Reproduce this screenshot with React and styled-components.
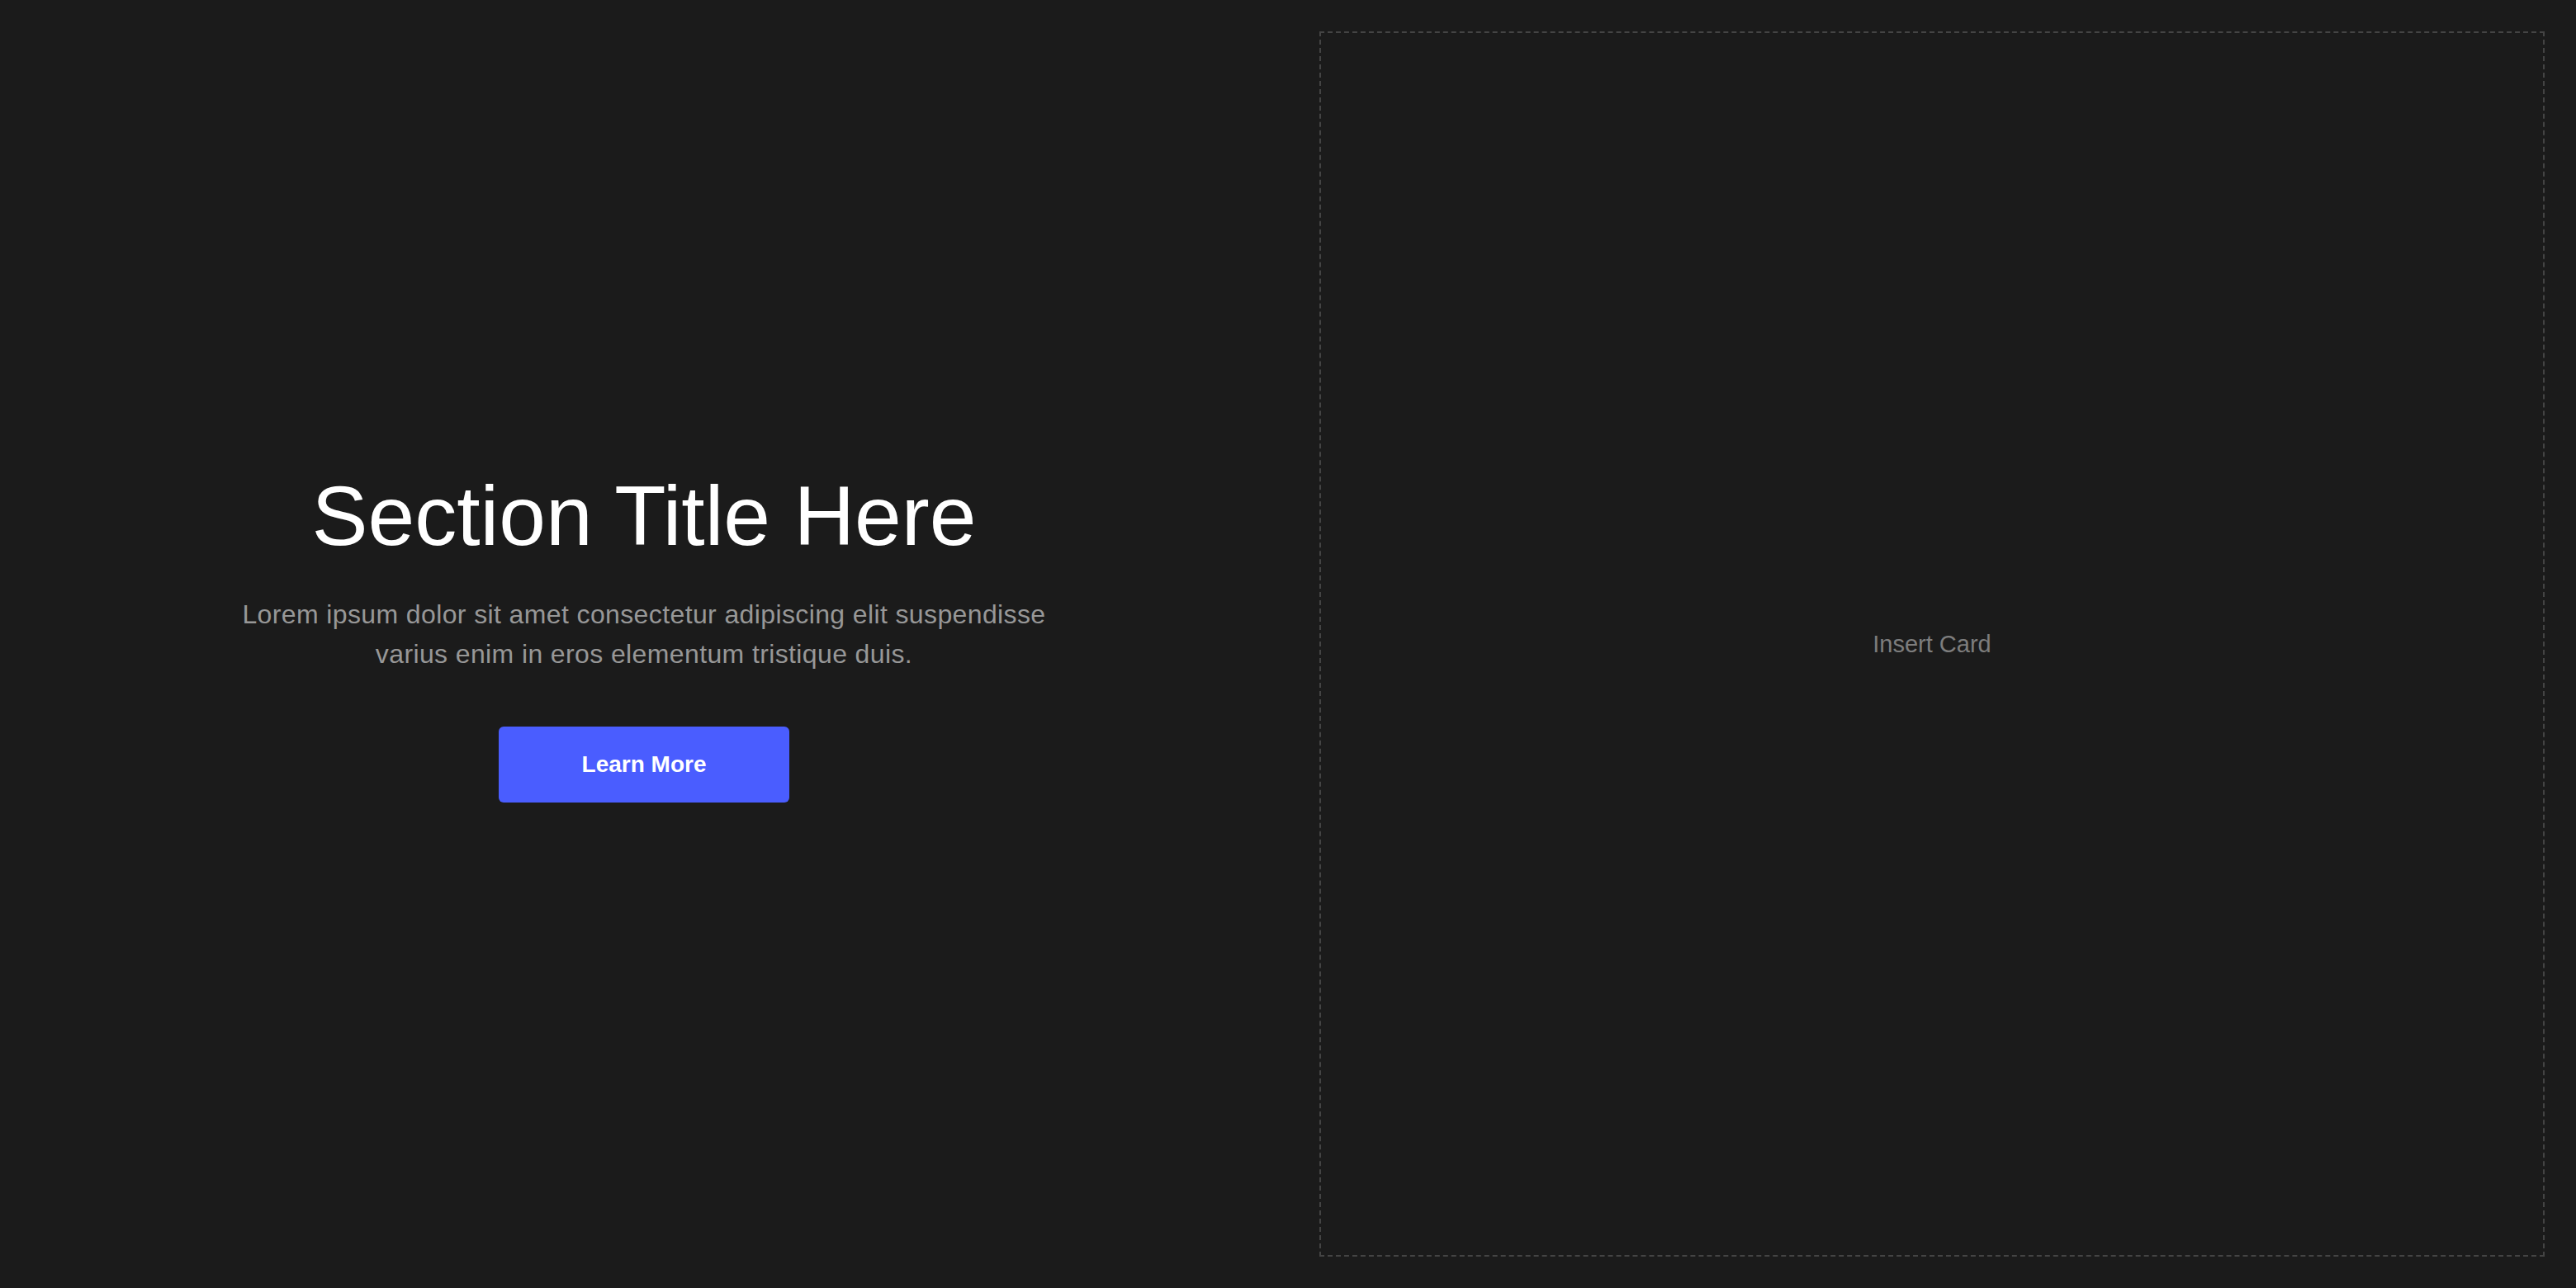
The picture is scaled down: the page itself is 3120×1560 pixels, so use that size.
import React from "react";
import styled, { createGlobalStyle } from "styled-components";

const Global = createGlobalStyle`
  html, body {
    margin: 0;
    padding: 0;
    background: #1b1b1b;
  }
  body {
    font-family: "Liberation Sans", Arial, Helvetica, sans-serif;
    -webkit-font-smoothing: antialiased;
  }
  * { box-sizing: border-box; }
`;

const Section = styled.section`
  display: grid;
  grid-template-columns: 1fr 1fr;
  gap: 76px;
  padding: 38px;
  width: 3120px;
  height: 1560px;
  background: #1b1b1b;
`;

const TextColumn = styled.div`
  display: flex;
  flex-direction: column;
  align-items: center;
  justify-content: center;
  text-align: center;
  padding-bottom: 19px;
`;

const Title = styled.h2`
  margin: 0;
  font-size: 102px;
  line-height: 1.1;
  font-weight: 400;
  color: #ffffff;
`;

const Body = styled.p`
  margin: 38px 0 0;
  max-width: 1024px;
  font-size: 32px;
  line-height: 48px;
  letter-spacing: 0.38px;
  color: #979797;
`;

const Button = styled.a`
  display: flex;
  align-items: center;
  justify-content: center;
  margin-top: 64px;
  width: 352px;
  height: 92px;
  border-radius: 6px;
  background: #4a5dff;
  color: #ffffff;
  font-size: 28px;
  font-weight: 700;
  text-decoration: none;
`;

const Placeholder = styled.div`
  display: flex;
  align-items: center;
  justify-content: center;
  border: 2px dashed #444444;
  color: #7d7d7d;
  font-size: 29px;
`;

export default function App() {
  return (
    <>
      <Global />
      <Section>
        <TextColumn>
          <Title>Section Title Here</Title>
          <Body>
            Lorem ipsum dolor sit amet consectetur adipiscing elit suspendisse
            varius enim in eros elementum tristique duis.
          </Body>
          <Button href="#">Learn More</Button>
        </TextColumn>
        <Placeholder>Insert Card</Placeholder>
      </Section>
    </>
  );
}
